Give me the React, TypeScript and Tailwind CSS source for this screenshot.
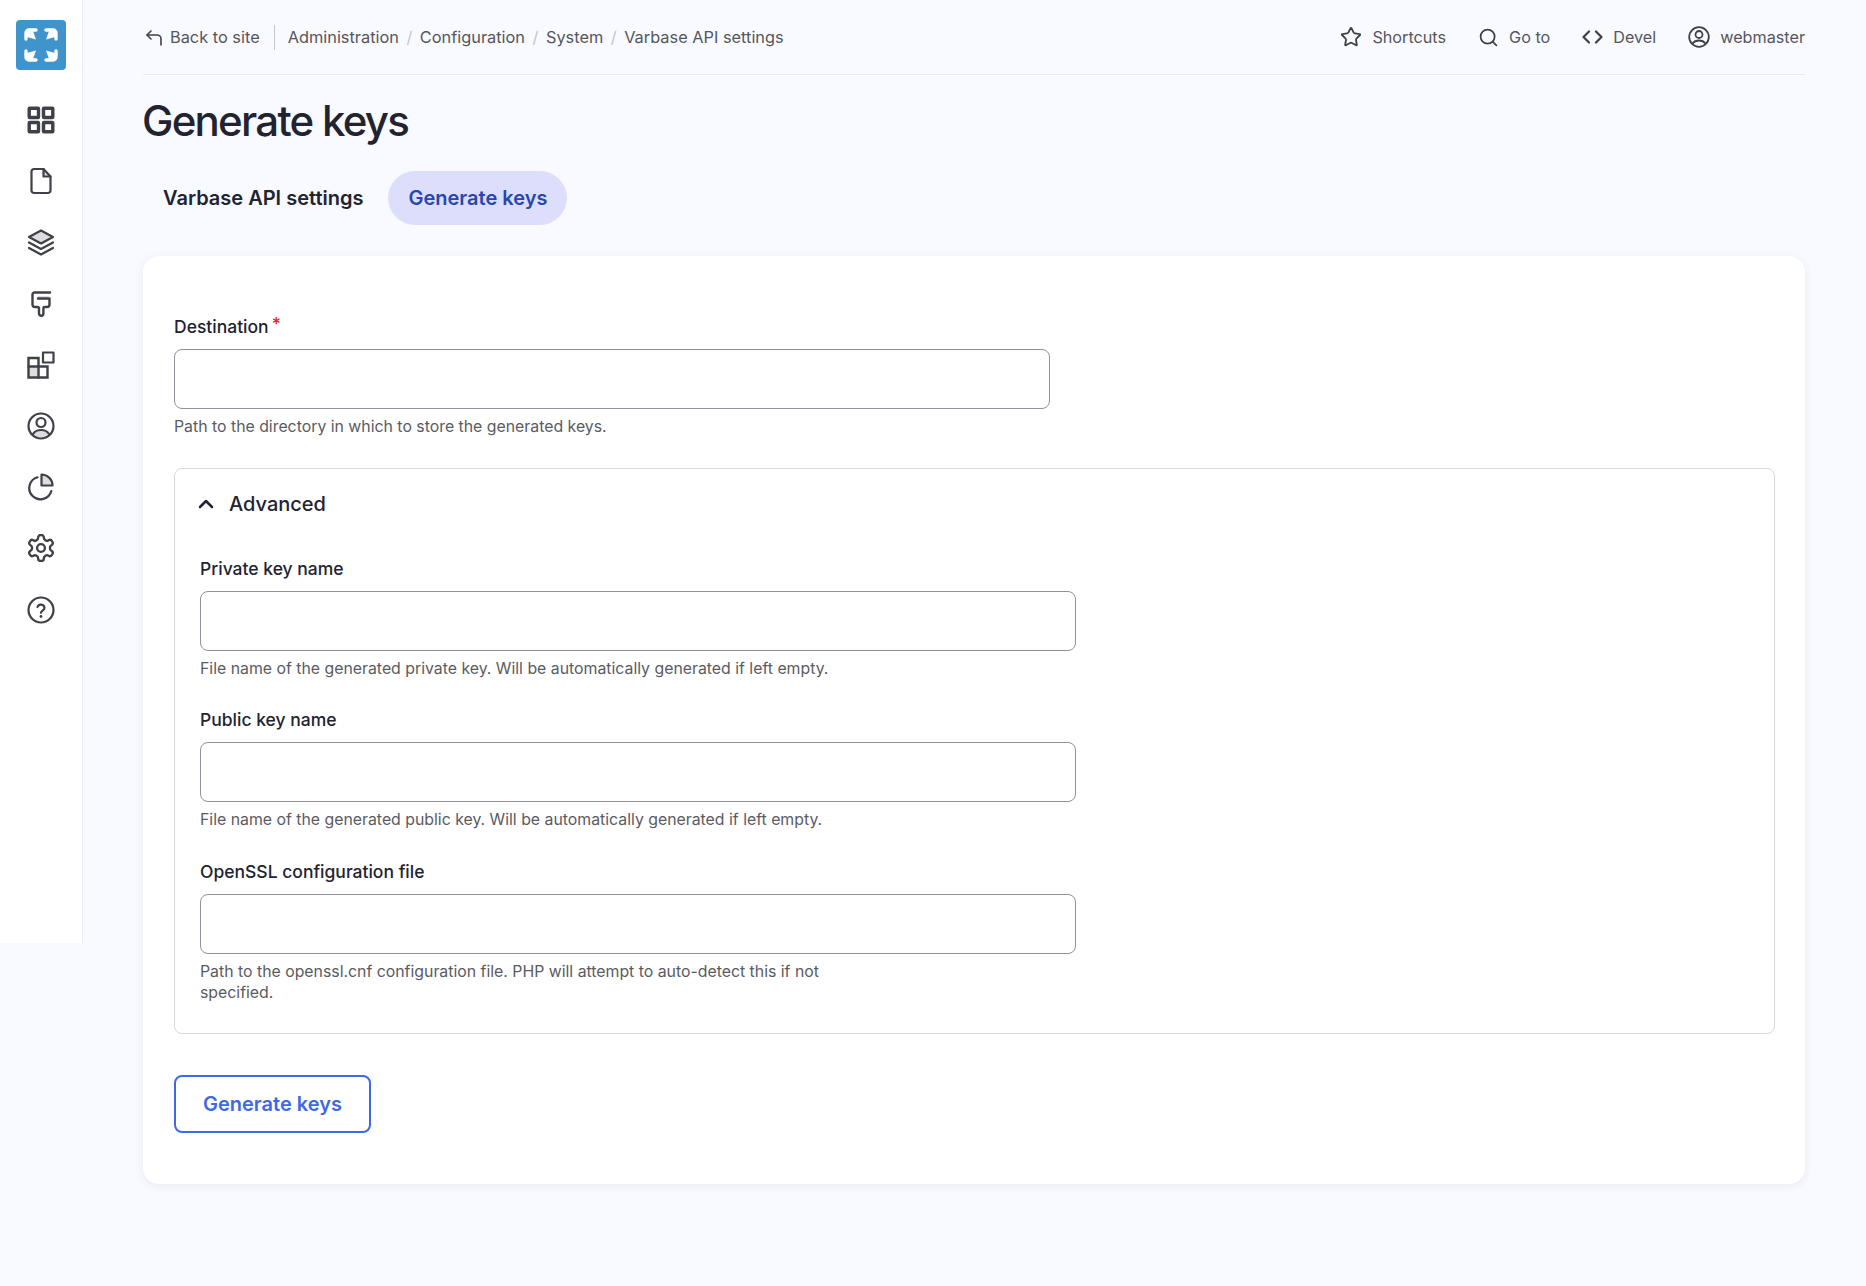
import type { ReactNode } from "react";
import { Star, Search, ChevronUp } from "lucide-react";

const ink = "#3f4048";
const tint = "#dddddf";

function Icon({ children, size = 28 }: { children: ReactNode; size?: number }) {
  return (
    <svg width={size} height={size} viewBox="0 0 28 28" fill="none" stroke={ink} strokeWidth="2.2" strokeLinecap="round" strokeLinejoin="round">
      {children}
    </svg>
  );
}

const navIcons: ReactNode[] = [
  <>
    <rect x="2.200" y="2.200" width="9.300" height="9.300" rx="0.500" strokeWidth="3.400" />
    <rect x="16.500" y="2.200" width="9.300" height="9.300" rx="0.500" strokeWidth="3.400" />
    <rect x="2.200" y="16.500" width="9.300" height="9.300" rx="0.500" strokeWidth="3.400" />
    <rect x="16.500" y="16.500" width="9.300" height="9.300" rx="0.500" strokeWidth="3.400" />
  </>,
  <>
    <path d="M16 8.500V2.500L23.500 10H17.500a1.500 1.500 0 0 1-1.500-1.500z" fill={tint} stroke="none" />
    <path d="M4.500 4.500a2.500 2.500 0 0 1 2.500-2.500h9.500l7 7.500v14a2.500 2.500 0 0 1-2.500 2.500H7a2.500 2.500 0 0 1-2.500-2.500z" />
    <path d="M16.500 2v7.500h7" />
  </>,
  <>
    <path d="M14 2.500 26 9l-12 6.500L2 9z" fill={tint} />
    <path d="M2 14.500 14 21l12-6.500" />
    <path d="M2 20 14 26.500 26 20" />
  </>,
  <>
    <path d="M22 9.500H11V6h11z" fill={tint} stroke="none" />
    <path d="M23 2.500H7.500a2 2 0 0 0-2 2v10a2.500 2.500 0 0 0 2.500 2.500h2.500c.800 0 1.500.700 1.500 1.500v5a2.200 2.200 0 0 0 4.400 0v-5c0-.800.700-1.500 1.500-1.500h2.100a2.500 2.500 0 0 0 2.500-2.500V8.500H11" strokeWidth="2.400" />
  </>,
  <>
    <rect x="16" y="1.500" width="10.500" height="10" />
    <path d="M1.500 15h11v11.500h-11z" fill={tint} stroke="none" />
    <path d="M1.500 7h10v8.500h9v11h-19z" strokeWidth="2.400" strokeLinejoin="miter" />
    <path d="M1.500 15.500h10v11" strokeWidth="2.400" strokeLinejoin="miter" />
  </>,
  <>
    <path d="M5.500 22.500c1.500-3 5-4.500 8.500-4.500s7 1.500 8.500 4.500c-2 2.500-5 4-8.500 4s-6.500-1.500-8.500-4z" fill={tint} stroke="none" />
    <circle cx="14" cy="14" r="12.500" />
    <circle cx="14" cy="10.500" r="4.500" />
    <path d="M6 22c1.500-2.500 4.500-4 8-4s6.500 1.500 8 4" />
  </>,
  <>
    <path d="M10.500 4.300A11.200 11.200 0 1 0 24.300 18" />
    <path d="M14.500 1.500A11 11 0 0 1 25.500 12.500H14.500z" fill={tint} />
  </>,
  <g transform="translate(-1.600 -1.600) scale(1.300)" strokeWidth="1.800">
    <path d="M12.220 2h-.44a2 2 0 0 0-2 2v.18a2 2 0 0 1-1 1.730l-.43.250a2 2 0 0 1-2 0l-.150-.080a2 2 0 0 0-2.730.730l-.220.380a2 2 0 0 0 .730 2.730l.150.100a2 2 0 0 1 1 1.720v.510a2 2 0 0 1-1 1.740l-.150.090a2 2 0 0 0-.730 2.730l.220.380a2 2 0 0 0 2.730.730l.150-.080a2 2 0 0 1 2 0l.430.250a2 2 0 0 1 1 1.730V20a2 2 0 0 0 2 2h.440a2 2 0 0 0 2-2v-.180a2 2 0 0 1 1-1.730l.430-.250a2 2 0 0 1 2 0l.150.080a2 2 0 0 0 2.730-.730l.220-.390a2 2 0 0 0-.730-2.730l-.150-.080a2 2 0 0 1-1-1.740v-.500a2 2 0 0 1 1-1.740l.150-.090a2 2 0 0 0 .730-2.730l-.220-.380a2 2 0 0 0-2.730-.730l-.150.080a2 2 0 0 1-2 0l-.430-.250a2 2 0 0 1-1-1.730V4a2 2 0 0 0-2-2z" />
    <circle cx="12" cy="12" r="3" />
  </g>,
  <>
    <circle cx="14" cy="14" r="12.500" />
    <path d="M10.500 11a3.600 3.600 0 0 1 7 1c0 2.500-3.500 2.800-3.500 4.800" />
    <path d="M14 20.500h.01" strokeWidth="2.800" />
  </>,
];

function Logo() {
  return (
    <div className="w-[50px] h-[50px] rounded-[4px] bg-[#3f94cb] flex items-center justify-center">
      <svg width="34" height="34" viewBox="0 0 34 34" fill="none" stroke="#ffffff" strokeWidth="3.400" strokeLinecap="round" strokeLinejoin="round">
        <path d="M2 11V5a3 3 0 0 1 3-3h7" />
        <path d="M22 2h7a3 3 0 0 1 3 3v6" />
        <path d="M32 23v6a3 3 0 0 1-3 3h-7" />
        <path d="M12 32H5a3 3 0 0 1-3-3v-6" />
        <g fill="#ffffff" stroke="none">
          <path d="M3 3h6l3 8.500L3 9z" />
          <path d="M31 3h-6l-3 8.500L31 9z" />
          <path d="M31 31h-6l-3-8.500L31 25z" />
          <path d="M3 31h6l3-8.500L3 25z" />
        </g>
      </svg>
    </div>
  );
}

function TopLink({ icon, label }: { icon: ReactNode; label: string }) {
  return (
    <div className="flex items-center gap-[10px]">
      {icon}
      <span>{label}</span>
    </div>
  );
}

function Field({ label, help, required }: { label: string; help: ReactNode; required?: boolean }) {
  return (
    <div>
      <label className="block text-[17.500px] leading-[24px] font-medium text-[#222330]">
        {label}
        {required && <span className="text-[#dc2626] ml-[3px] relative -top-[3px]">*</span>}
      </label>
      <input type="text" className="block mt-[10px] w-[876px] h-[60px] bg-white rounded-[8px] border border-[#8e929c] outline-none" />
      <div className="mt-[7px] max-w-[660px] text-[15.840px] leading-[21px] text-[#5a5b63]">{help}</div>
    </div>
  );
}

export default function App() {
  return (
    <div className="flex min-h-screen bg-[#f9faff] text-[#222330]" style={{ fontFamily: "Inter, 'Liberation Sans', sans-serif" }}>
      <aside className="w-[83px] h-[943px] shrink-0 bg-white border-r border-[#e9eaf0] flex flex-col items-center">
        <div className="mt-[20px] mb-[36px]">
          <Logo />
        </div>
        <nav className="flex flex-col gap-[33.200px]">
          {navIcons.map((icon, i) => (
            <div key={i} className="flex items-center justify-center h-[28px]">
              <Icon>{icon}</Icon>
            </div>
          ))}
        </nav>
      </aside>

      <main className="flex-1 pl-[60px] pr-[61px] pb-[102px]">
        <header className="h-[75px] border-b border-[#e8e9ee] flex items-center justify-between text-[16.350px] text-[#55565b]">
          <div className="flex items-center pt-[1px]">
            <svg width="18" height="18" viewBox="0 0 18 18" fill="none" stroke={ink} strokeWidth="1.600" strokeLinecap="round" strokeLinejoin="round" className="ml-[2px] mr-[7px]">
              <path d="M6 2 2 6l4 4" />
              <path d="M2 6h10a4 4 0 0 1 4 4v6" />
            </svg>
            <span>Back to site</span>
            <div className="w-px h-[25px] bg-[#c4c5ca] ml-[14px] mr-[13px]" />
            <nav className="flex items-center">
              <span>Administration</span>
              <span className="mx-[7.500px] text-[#c4c5ca]">/</span>
              <span>Configuration</span>
              <span className="mx-[7.500px] text-[#c4c5ca]">/</span>
              <span>System</span>
              <span className="mx-[7.500px] text-[#c4c5ca]">/</span>
              <span>Varbase API settings</span>
            </nav>
          </div>
          <div className="flex items-center gap-[32px] pt-[1px] text-[16.200px]">
            <TopLink icon={<Star size={22} color={ink} strokeWidth={2} />} label="Shortcuts" />
            <TopLink icon={<Search size={21} color={ink} strokeWidth={2} />} label="Go to" />
            <TopLink
              icon={
                <svg width="21" height="14" viewBox="0 0 21 14" fill="none" stroke={ink} strokeWidth="2.200" strokeLinecap="round" strokeLinejoin="round">
                  <path d="M7 1.500 1.500 7 7 12.500" />
                  <path d="M14 1.500 19.500 7 14 12.500" />
                </svg>
              }
              label="Devel"
            />
            <TopLink
              icon={
                <svg width="22" height="22" viewBox="0 0 22 22" fill="none" stroke={ink} strokeWidth="1.800">
                  <circle cx="11" cy="11" r="9.800" />
                  <circle cx="11" cy="8.500" r="3.500" />
                  <path d="M4.500 17.500c1.500-2 4-3 6.500-3s5 1 6.500 3" />
                </svg>
              }
              label="webmaster"
            />
          </div>
        </header>

        <h1 className="mt-[20px] -ml-px text-[42px] leading-[52px] font-medium tracking-[-1.750px] text-[#222330]">Generate keys</h1>

        <div className="mt-[24px] flex items-center gap-[5px] text-[20px] font-semibold">
          <div className="h-[54px] px-[20px] flex items-center">Varbase API settings</div>
          <div className="h-[54px] px-[20px] flex items-center rounded-full bg-[#dcdefb] text-[#2847ad]">Generate keys</div>
        </div>

        <section className="mt-[31px] bg-white rounded-[16px] shadow-[0_2px_10px_rgba(40,50,90,0.08)] pl-[31px] pr-[30px] pt-[59px] pb-[51px]">
          <Field label="Destination" required help="Path to the directory in which to store the generated keys." />

          <div className="mt-[31px] border border-[#d8d9de] rounded-[8px] px-[25px] pt-[21px] pb-[30px]">
            <div className="flex items-center gap-[11px] text-[20px] leading-[28px] font-[550]">
              <ChevronUp size={24} color="#222330" strokeWidth={2.500} className="-ml-[6px]" />
              <span>Advanced</span>
            </div>
            <div className="mt-[39px] flex flex-col gap-[29px]">
              <Field label="Private key name" help="File name of the generated private key. Will be automatically generated if left empty." />
              <Field label="Public key name" help="File name of the generated public key. Will be automatically generated if left empty." />
              <div className="mt-px">
                <Field label="OpenSSL configuration file" help="Path to the openssl.cnf configuration file. PHP will attempt to auto-detect this if not specified." />
              </div>
            </div>
          </div>

          <button className="mt-[41px] block w-[197px] h-[58px] rounded-[8px] border-2 border-[#3e68e6] bg-white text-[#3e68e6] text-[20px] font-semibold">
            Generate keys
          </button>
        </section>
      </main>
    </div>
  );
}
